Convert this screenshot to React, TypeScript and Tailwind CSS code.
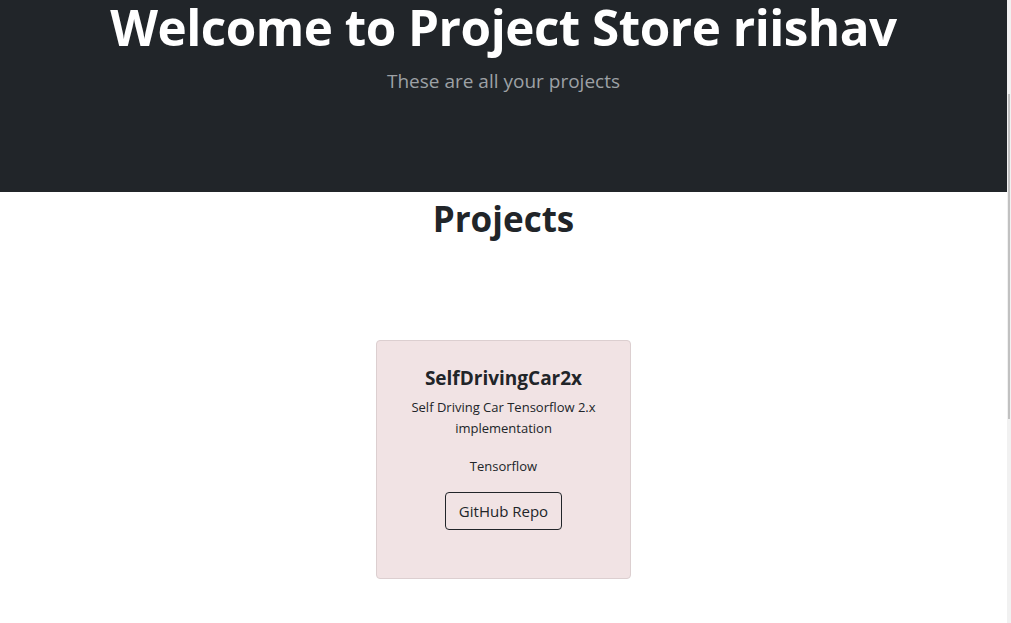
const projects = [
  {
    name: 'SelfDrivingCar2x',
    description: 'Self Driving Car Tensorflow 2.x implementation',
    tech: 'Tensorflow',
  },
];

export default function App() {
  return (
    <div className="flex h-[623px] overflow-hidden bg-white font-['Open_Sans',sans-serif] text-[#212529]">
      <div className="flex w-[1007px] flex-col">
        <header className="h-[192px] shrink-0 bg-[#212529] pt-[2px] text-center">
          <h1 className="text-[49.4px] font-bold leading-none tracking-[-0.5px] text-white">
            Welcome to Project Store riishav
          </h1>
          <p className="mt-[16px] text-[19px] leading-[1.5] text-[#9da1a5]">These are all your projects</p>
        </header>

        <main className="flex-1 text-center">
          <h1 className="pt-[6px] text-[35px] font-bold leading-[1.2]">Projects</h1>

          <div className="mt-[100px] flex justify-center">
            {projects.map((project) => (
              <div
                key={project.name}
                className="flex h-[239px] w-[255px] flex-col items-center rounded-[4px] border border-[#dccfd0] bg-[#f1e3e4] px-[16px] pt-[26px]"
              >
                <h5 className="text-[19px] font-bold leading-[1.2]">{project.name}</h5>
                <p className="mt-[7px] text-[13px] leading-[21px]">{project.description}</p>
                <p className="mt-[17px] text-[13px] leading-[21px]">{project.tech}</p>
                <button className="mt-[15px] rounded-[4px] border border-[#212529] px-[13px] py-[6px] text-[15px] leading-[24px]">
                  GitHub Repo
                </button>
              </div>
            ))}
          </div>
        </main>
      </div>

      {/* scrollbar strip */}
      <div className="w-[4px] shrink-0 bg-[#f1f1f1]">
        <div className="mx-auto mt-[94px] h-[325px] w-[2px] bg-[#c1c1c1]" />
      </div>
    </div>
  );
}
